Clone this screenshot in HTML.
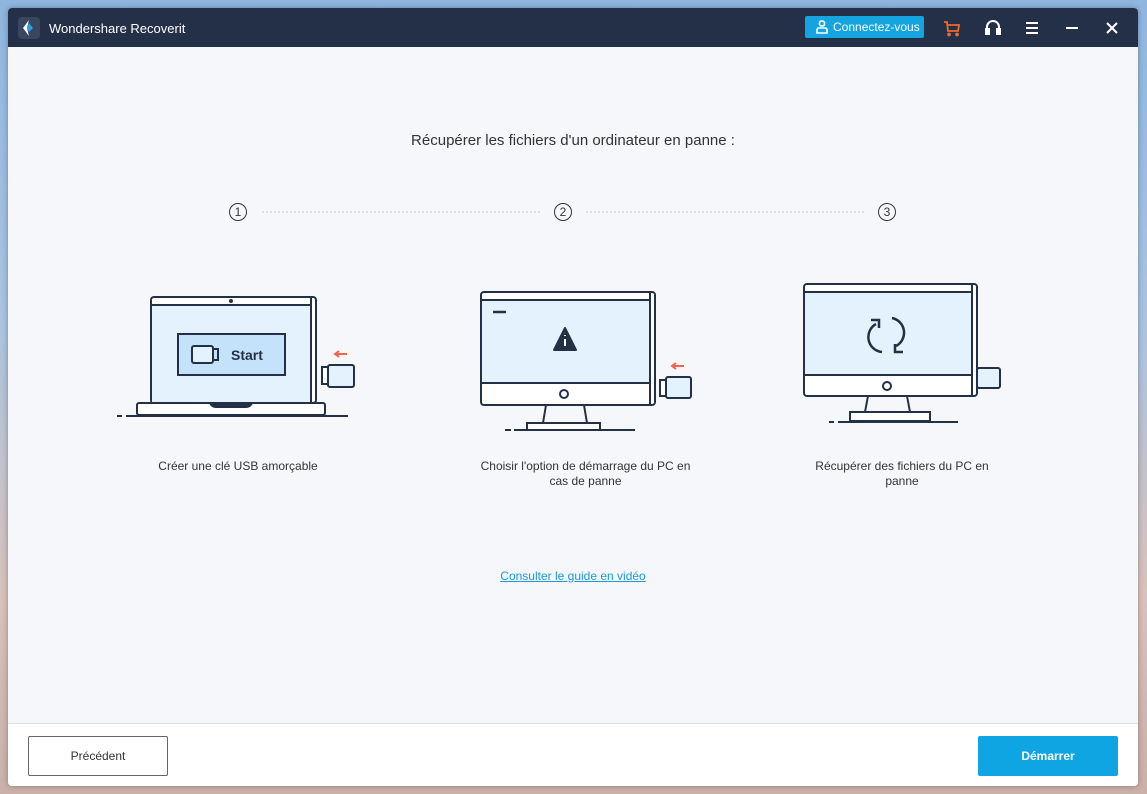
<!DOCTYPE html>
<html><head><meta charset="utf-8"><style>
*{margin:0;padding:0;box-sizing:border-box}
html,body{width:1147px;height:794px;overflow:hidden;font-family:"Liberation Sans",sans-serif}
body{background:linear-gradient(180deg,#8fb6df 0%,#a9c3e0 40%,#d8c2bb 75%,#c9b0a8 100%);position:relative}
.win{position:absolute;left:8px;top:8px;width:1130px;height:778px;background:#f5f7fa;border-radius:4px;overflow:hidden;box-shadow:0 0 6px rgba(0,0,0,.3)}
.tb{height:39px;background:#242f48;position:relative;color:#fff}
.t{position:absolute;top:13px;font-size:13px}
.foot{position:absolute;left:0;top:715px;width:100%;height:63px;background:#fff;border-top:1px solid #dcdfe4}
.btn{position:absolute;top:12px;height:40px;width:140px;font-size:12px;display:flex;align-items:center;justify-content:center;border-radius:2px}
.cap{position:absolute;font-size:12px;color:#333;text-align:center;line-height:15px}
</style></head><body>
<div class="win">
 <div class="tb">
  <svg style="position:absolute;left:10px;top:9px" width="22" height="22" viewBox="0 0 22 22"><rect width="22" height="22" rx="4" fill="#3a4560"/><path d="M11 3 L5 11 L11 19 L9 11 Z" fill="#fff"/><path d="M11 6 L15 11 L11 15 L9 11Z" fill="#2ba2e0"/></svg>
  <div class="t" style="left:41px">Wondershare Recoverit</div>
  <div style="position:absolute;left:797px;top:8px;width:119px;height:22px;background:#14a5e0;border-radius:2px;font-size:12px;color:#fff;line-height:22px;padding-left:28px">Connectez-vous</div>
  <svg style="position:absolute;left:808px;top:12px" width="12" height="14" viewBox="0 0 12 14" fill="none" stroke="#fff" stroke-width="1.6"><rect x="3.5" y="1" width="5" height="5" rx="2"/><path d="M1 13 V10 Q1 8 3 8 H9 Q11 8 11 10 V13 Z"/></svg>
  <svg style="position:absolute;left:935px;top:11px" width="18" height="18" viewBox="0 0 18 18" fill="none" stroke="#f06a2c" stroke-width="1.8"><path d="M1 3 H4 L5 12 H15 L16 6 H4.5"/><circle cx="6" cy="15.5" r="1" fill="#f06a2c"/><circle cx="14" cy="15.5" r="1" fill="#f06a2c"/></svg>
  <svg style="position:absolute;left:976px;top:11px" width="18" height="18" viewBox="0 0 18 18" fill="none" stroke="#fff" stroke-width="2"><path d="M3 11 V8 A6 6 0 0 1 15 8 V11"/><rect x="2" y="10" width="3" height="5" fill="#fff"/><rect x="13" y="10" width="3" height="5" fill="#fff"/></svg>
  <svg style="position:absolute;left:1017px;top:13px" width="14" height="14" viewBox="0 0 14 14" stroke="#fff" stroke-width="2"><path d="M1 2H13M1 7H13M1 12H13"/></svg>
  <svg style="position:absolute;left:1057px;top:13px" width="14" height="14" stroke="#fff" stroke-width="2"><path d="M1 7H13"/></svg>
  <svg style="position:absolute;left:1097px;top:13px" width="14" height="14" stroke="#fff" stroke-width="2"><path d="M2 2L12 12M12 2L2 12"/></svg>
 </div>
 <div style="position:absolute;top:124px;width:100%;text-align:center;font-size:15px;color:#333">Récupérer les fichiers d'un ordinateur en panne :</div>
 <div class="cap" style="left:130px;top:451px;width:200px">Créer une clé USB amorçable</div>
 <div class="cap" style="left:465px;top:451px;width:225px">Choisir l'option de démarrage du PC en cas de panne</div>
 <div class="cap" style="left:800px;top:451px;width:188px">Récupérer des fichiers du PC en panne</div>
 <div style="position:absolute;top:561px;width:100%;text-align:center;font-size:12px;color:#1a9ad8;text-decoration:underline">Consulter le guide en vidéo</div>
 <div class="foot">
  <div class="btn" style="left:20px;border:1px solid #666;color:#333">Précédent</div>
  <div class="btn" style="left:970px;background:#0ea5e2;color:#fff;font-weight:bold">Démarrer</div>
 </div>
</div>
<svg style="position:absolute;left:0;top:0" width="1147" height="794" viewBox="0 0 1147 794" font-family="Liberation Sans" fill="none" stroke="#243046" stroke-width="2">
 <g stroke="#333" stroke-width="1" fill="#333">
  <circle cx="238" cy="212" r="8.5" fill="none"/><text x="238" y="216" text-anchor="middle" stroke="none" font-size="12">1</text>
  <circle cx="563" cy="212" r="8.5" fill="none"/><text x="563" y="216" text-anchor="middle" stroke="none" font-size="12">2</text>
  <circle cx="887" cy="212" r="8.5" fill="none"/><text x="887" y="216" text-anchor="middle" stroke="none" font-size="12">3</text>
 </g>
 <path d="M262 212H542M586 212H866" stroke="#c8ccd2" stroke-width="1" stroke-dasharray="2 2"/>
 <rect x="151" y="297" width="165" height="106" rx="3" fill="#fff"/>
 <rect x="152" y="305" width="159" height="97" fill="#e3f2fd" stroke="none"/>
 <path d="M152 305H311M311 298V402"/>
 <circle cx="231" cy="301" r="1" fill="#243046"/>
 <rect x="178" y="334" width="107" height="41" fill="#c4e3fb"/>
 <rect x="192" y="346" width="21" height="17" rx="2" fill="#e3f2fd"/><rect x="213" y="349" width="5" height="11"/>
 <text x="231" y="360" fill="#243046" stroke="none" font-size="14" font-weight="bold">Start</text>
 <rect x="137" y="403" width="188" height="12" rx="2" fill="#fff"/>
 <path d="M210 403Q212 407 216 407H246Q250 407 252 403" fill="#243046"/>
 <path d="M117 416H122M126 416H348"/>
 <rect x="322" y="367" width="10" height="17" fill="#fff"/><rect x="328" y="365" width="26" height="22" rx="2" fill="#e3f2fd"/>
 <path d="M347 354H336M339 351L335 354L339 357" stroke="#f4644c"/>
 <rect x="481" y="292" width="174" height="113" rx="3" fill="#fff"/>
 <rect x="482" y="300" width="167" height="83" fill="#e3f2fd" stroke="none"/>
 <path d="M482 300H649M482 383H649M650 293V404"/>
 <path d="M493 312H506" stroke-width="2.5"/>
 <path d="M565 328L576 350H554Z" fill="#243046" stroke-linejoin="round"/><path d="M565 339V346M565 335V336" stroke="#fff" stroke-width="2"/>
 <circle cx="564" cy="394" r="4"/>
 <path d="M546 405L543 423M584 405L587 423" /><rect x="527" y="423" width="73" height="7" fill="#fff"/>
 <path d="M505 430H511M514 430H635"/>
 <rect x="660" y="380" width="10" height="16" fill="#fff"/><rect x="666" y="377" width="25" height="21" rx="2" fill="#e3f2fd"/>
 <path d="M684 366H673M676 363L672 366L676 369" stroke="#f4644c"/>
 <rect x="804" y="284" width="173" height="112" rx="3" fill="#fff"/>
 <rect x="805" y="292" width="166" height="83" fill="#e3f2fd" stroke="none"/>
 <path d="M805 292H971M805 375H971M972 285V395"/>
 <circle cx="887" cy="386" r="4"/>
 <path d="M868 396L865 412M907 396L910 412"/><rect x="850" y="412" width="80" height="9" fill="#fff"/>
 <path d="M829 422H834M838 422H958"/>
 <rect x="977" y="368" width="23" height="20" rx="2" fill="#e3f2fd"/>
 <path d="M876 324A15 15 0 0 0 882 352M896 346A15 15 0 0 0 892 318" stroke-width="2.5"/>
 <path d="M871 320H879V328M903 352H895V344" stroke-width="2.5"/>
</svg>
</body></html>
